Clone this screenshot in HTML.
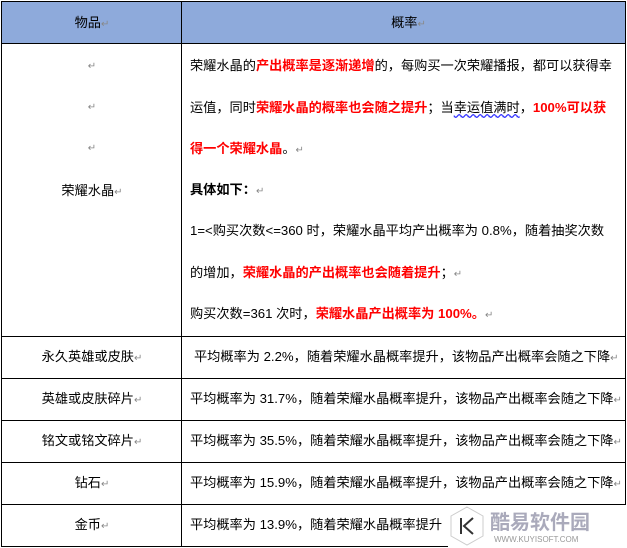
<!DOCTYPE html><html><head><meta charset="utf-8"><style>
body{margin:0;width:627px;height:548px;background:#fff;position:relative;overflow:hidden;font-family:"Liberation Sans","Noto Sans CJK SC",sans-serif;font-size:13.2px;color:#000}
.l{position:absolute;background:#000}
.t{position:absolute;white-space:nowrap;line-height:16px}
.c{position:absolute;left:17px;width:150px;text-align:center;white-space:nowrap;line-height:16px}
.r{color:#f00;font-weight:bold}
.m{color:#888;font-size:10px}
</style></head><body>
<div style="position:absolute;left:1px;top:1px;width:624px;height:42px;background:#8eaadb"></div>
<div class="l" style="left:1px;top:1px;width:625px;height:1px"></div>
<div class="l" style="left:1px;top:43px;width:625px;height:1px"></div>
<div class="l" style="left:1px;top:336px;width:625px;height:1px"></div>
<div class="l" style="left:1px;top:378px;width:625px;height:1px"></div>
<div class="l" style="left:1px;top:420px;width:625px;height:1px"></div>
<div class="l" style="left:1px;top:462px;width:625px;height:1px"></div>
<div class="l" style="left:1px;top:504px;width:625px;height:1px"></div>
<div class="l" style="left:1px;top:546px;width:625px;height:1px"></div>
<div class="l" style="left:1px;top:1px;width:1px;height:546px"></div>
<div class="l" style="left:181px;top:1px;width:1px;height:546px"></div>
<div class="l" style="left:625px;top:1px;width:1px;height:546px"></div>
<div class="c" style="top:15px">物品<span class="m">↵</span></div>
<div class="t" style="left:192px;width:433px;text-align:center;top:15px">概率<span class="m">↵</span></div>
<div class="c m" style="top:59px">↵</div>
<div class="c m" style="top:100px">↵</div>
<div class="c m" style="top:141px">↵</div>
<div class="c" style="top:183px">荣耀水晶<span class="m">↵</span></div>
<div class="t" style="left:190px;top:58px">荣耀水晶的<span class="r">产出概率是逐渐递增</span>的，每购买一次荣耀播报，都可以获得幸</div>
<div class="t" style="left:190px;top:100px">运值，同时<span class="r">荣耀水晶的概率也会随之提升</span>；当<span style="text-decoration:underline wavy #33f">幸运值满时</span>，<span class="r">100%可以获</span></div>
<div class="t" style="left:190px;top:141px"><span class="r">得一个荣耀水晶</span>。<span class="m">↵</span></div>
<div class="t" style="left:190px;top:182px"><b>具体如下：</b><span class="m">↵</span></div>
<div class="t" style="left:190px;top:223px">1=&lt;购买次数&lt;=360 时，荣耀水晶平均产出概率为 0.8%，随着抽奖次数</div>
<div class="t" style="left:190px;top:265px">的增加，<span class="r">荣耀水晶的产出概率也会随着提升</span>；<span class="m">↵</span></div>
<div class="t" style="left:190px;top:306px">购买次数=361 次时，<span class="r">荣耀水晶产出概率为 100%。</span><span class="m">↵</span></div>
<div class="c" style="top:349px">永久英雄或皮肤<span class="m">↵</span></div>
<div class="t" style="left:194px;top:349px">平均概率为 2.2%，随着荣耀水晶概率提升，该物品产出概率会随之下降<span class="m">↵</span></div>
<div class="c" style="top:391px">英雄或皮肤碎片<span class="m">↵</span></div>
<div class="t" style="left:190px;top:391px">平均概率为 31.7%，随着荣耀水晶概率提升，该物品产出概率会随之下降<span class="m">↵</span></div>
<div class="c" style="top:433px">铭文或铭文碎片<span class="m">↵</span></div>
<div class="t" style="left:190px;top:433px">平均概率为 35.5%，随着荣耀水晶概率提升，该物品产出概率会随之下降<span class="m">↵</span></div>
<div class="c" style="top:475px">钻石<span class="m">↵</span></div>
<div class="t" style="left:190px;top:475px">平均概率为 15.9%，随着荣耀水晶概率提升，该物品产出概率会随之下降<span class="m">↵</span></div>
<div class="c" style="top:517px">金币<span class="m">↵</span></div>
<div class="t" style="left:190px;top:517px">平均概率为 13.9%，随着荣耀水晶概率提升</div>
<div style="position:absolute;left:448px;top:505px;width:179px;height:43px;background:#fff"></div>
<svg style="position:absolute;left:448px;top:505px" width="38" height="42"><polygon points="19,2 35,11 35,31 19,40 3,31 3,11" fill="#fff" stroke="#ccc"/><path d="M13,13V29M25,13L16,21L25,29" stroke="#333" stroke-width="2" fill="none"/></svg>
<div class="t" style="left:490px;top:512px;font-size:20px;color:#aab;font-weight:bold;line-height:22px">酷易软件园</div>
<div class="t" style="left:494px;top:535px;font-size:8px;color:#999;line-height:10px">WWW.KUYISOFT.COM</div>
</body></html>
